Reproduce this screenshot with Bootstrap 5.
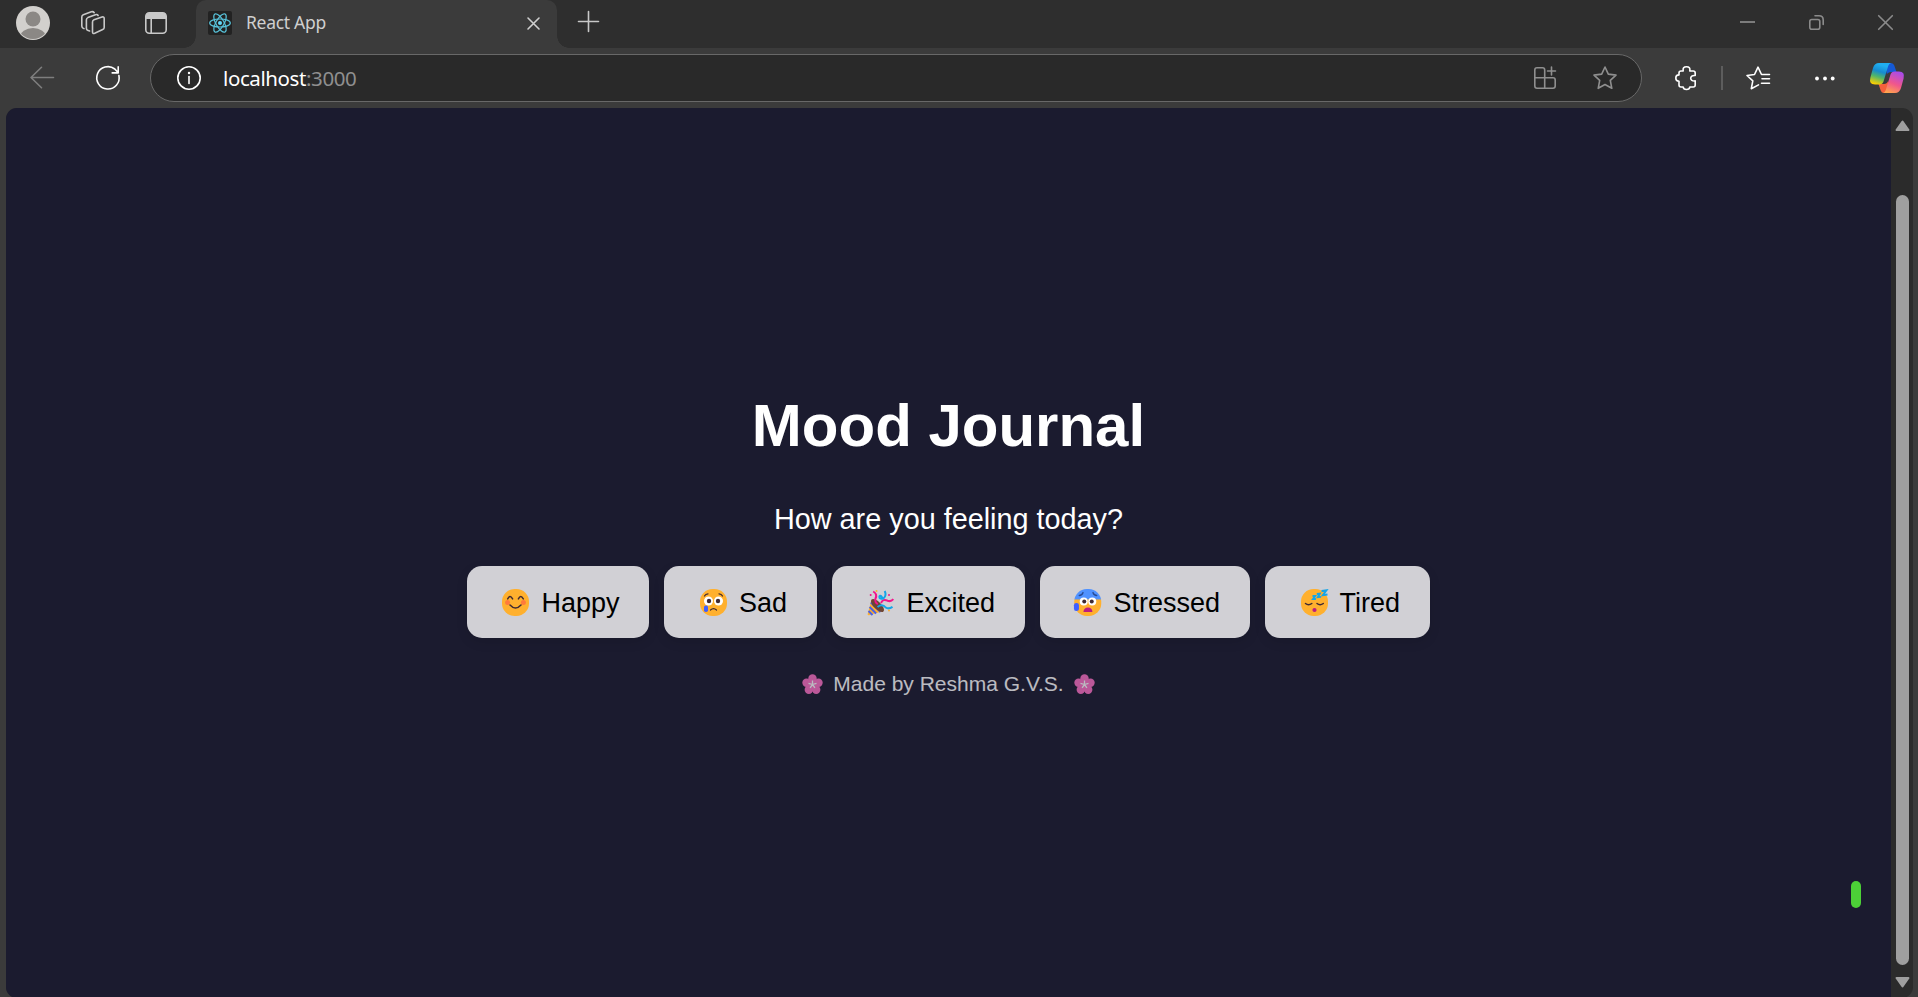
<!DOCTYPE html>
<html lang="en" data-bs-theme="dark">
<head>
<meta charset="utf-8">
<title>React App</title>
<link href="https://cdn.jsdelivr.net/npm/bootstrap@5.3.0/dist/css/bootstrap.min.css" rel="stylesheet">
<style>
html,body{height:100%}
body{background:#3b3b3b;overflow:hidden;font-family:"Noto Sans","Open Sans",sans-serif}
svg{display:block;flex:none;overflow:visible}
.ln{fill:none;stroke:currentColor;stroke-width:1.6;stroke-linecap:round;stroke-linejoin:round}
.strip{height:48px;background:#2e2e2e;color:#c8c8c8;padding-left:16px;padding-right:25px}
.strip-tools{gap:31px;width:180px;padding-bottom:2px}
.strip-tools svg:last-child{margin-left:9px}
.tab-shape{width:361px;height:48px;background:#3b3b3b;border-radius:10px 10px 0 0;padding:0 17px 2px 12px;color:#cfcfcf;font-size:17.5px}
.tab-shape::before,.tab-shape::after{content:"";position:absolute;bottom:0;width:12px;height:12px}
.tab-shape::before{left:-12px;background:radial-gradient(circle at 0 0,transparent 11.5px,#3b3b3b 12px)}
.tab-shape::after{right:-12px;background:radial-gradient(circle at 100% 0,transparent 11.5px,#3b3b3b 12px)}
.tab-title{margin-left:14px;letter-spacing:-.3px;padding-bottom:1px}
.new-tab{margin:0 0 5px 21px}
.win{gap:54px;color:#8b8b8b;padding-bottom:3px}
.tools{height:60px;padding:0 14px 0 30px;color:#fff}
.addr{width:1492px;height:48px;margin-left:30px;border:1.5px solid #686868;border-radius:24px;background:#292929;padding:0 24px 0 25.5px;font-size:20.5px}
.addr-text{margin-left:22.5px;letter-spacing:-.4px;line-height:1;padding-top:1px}
.dim{color:#8f8f8f}
.split{width:2px;height:24px;background:#5d5d5d;margin:0 23px 0 25px}
.frame{margin:0 5px 0 6px;height:890px;border-radius:11px;overflow:hidden;background:#2b2b2b}
.mood{background:#1b1b2f;font-family:"Liberation Sans",Arial,sans-serif;color:#fff;padding-top:283px}
.mood h1{font-size:60px;font-weight:700;line-height:70px;margin:0 0 41px}
.mood .ask{font-size:28.8px;line-height:34px;margin:0 0 30px}
.mood-row{gap:15px}
.mood-btn{--bs-btn-bg:#d1d0d5;--bs-btn-color:#000;--bs-btn-border-width:0;--bs-btn-border-radius:15px;--bs-btn-font-size:27px;--bs-btn-line-height:32px;--bs-btn-padding-x:0;height:72px;padding:2px 30px 0 35.5px;gap:12px;box-shadow:0 4px 12px rgba(0,0,0,.1)}
.mood-btn svg{margin-bottom:2px}
.mood-btn.wide{padding-left:34px}
.made{font-size:21px;line-height:24px;margin-top:34px;gap:10px;opacity:.7}
.spark{right:30px;top:773px;width:10px;height:27px;background:#4cd137}
.sbar{width:22px;padding:12px 0 9px}
.thumb{width:13px;height:770px;background:#9f9f9f;margin:64px 0 12px}
</style>
</head>
<body>
<div class="strip d-flex align-items-start">
  <div class="strip-tools d-flex align-items-center h-100">
    <svg width="34" height="34" viewBox="0 0 34 34"><defs><clipPath id="av"><circle cx="17" cy="17" r="16"/></clipPath></defs><circle cx="17" cy="17" r="17" fill="#d2d0cd"/><g clip-path="url(#av)" fill="#8b8885"><circle cx="17" cy="13" r="7.5"/><ellipse cx="17" cy="31" rx="13" ry="9"/></g></svg>
    <svg width="24" height="24" viewBox="0 0 24 24" class="ln"><path d="M11.500 11q0-1.600 1.500-2.200l8-2.800q2.200-.6 2.200 1.500v9q0 1.500-1.500 2.100l-8 3.600q-2.200.9-2.200-1.300z"/><path d="M8.600 20l-2-.7q-1.200-.5-1.200-2V8.800q0-1.500 1.500-2.200l7.500-2.900q2-.5 2.700.8"/><path d="M3 17.600l-1-.5q-1.200-.8-1.200-2.100V6q0-1.500 1.500-2.200l8-3q2-.5 2.900.9"/></svg>
    <svg width="22" height="22" viewBox="0 0 22 22"><rect x=".8" y=".8" width="20.400" height="20.400" rx="3.500" class="ln"/><path d="M1 7V4q0-3 3-3h14q3 0 3 3v3z" fill="#c8c8c8"/><path d="M6.200 7v14" class="ln"/></svg>
  </div>
  <div class="tab-shape position-relative d-flex align-items-center">
    <svg width="24" height="24" viewBox="0 0 24 24"><rect width="24" height="24" rx="2" fill="#222222"/><g fill="none" stroke="#58c4dc" stroke-width="1.200"><ellipse cx="12" cy="12" rx="10.300" ry="4"/><ellipse cx="12" cy="12" rx="10.300" ry="4" transform="rotate(60 12 12)"/><ellipse cx="12" cy="12" rx="10.300" ry="4" transform="rotate(120 12 12)"/></g><circle cx="12" cy="12" r="2" fill="#61dafb"/></svg>
    <span class="tab-title">React App</span>
    <svg class="ms-auto" width="13" height="13" viewBox="0 0 13 13"><path d="M1 1l11 11M12 1L1 12" class="ln"/></svg>
  </div>
  <div class="d-flex align-items-center flex-grow-1 h-100">
    <svg class="new-tab" width="21" height="21" viewBox="0 0 21 21"><path d="M10.500 .5v20M.5 10.500h20" class="ln"/></svg>
    <div class="win d-flex align-items-center ms-auto">
      <svg width="15" height="15" viewBox="0 0 15 15"><path d="M0 7h15" stroke="currentColor" stroke-width="1.700"/></svg>
      <svg width="15" height="15" viewBox="0 0 15 15" class="ln"><rect x=".8" y="4.500" width="10" height="9.700" rx="2"/><path d="M6 .8h4q4.200 0 4.200 4.200v4.500"/></svg>
      <svg width="15" height="15" viewBox="0 0 15 15"><path d="M.7.7l13.600 13.600M14.300.7L.7 14.300" class="ln"/></svg>
    </div>
  </div>
</div>
<div class="tools d-flex align-items-center">
  <svg width="24" height="22" viewBox="0 0 24 22" style="color:#7e7e7e"><path d="M23.500 10.500H1M11.500.3L1 10.500l10.500 10.200" class="ln"/></svg>
  <svg style="margin-left:42px" width="24" height="24" viewBox="0 0 24 24"><path d="M22.900 9.500A11.200 11.200 0 1 1 18.800 3L22 6.500M22.200.9v6h-6" class="ln"/></svg>
  <div class="addr d-flex align-items-center">
    <svg width="24" height="24" viewBox="0 0 24 24"><circle cx="12" cy="12" r="11.200" class="ln"/><path d="M12 10.500v7" class="ln"/><circle cx="12" cy="7" r="1.200" fill="#fff"/></svg>
    <span class="addr-text">localhost<span class="dim">:3000</span></span>
    <svg class="ln dim ms-auto" width="22" height="22" viewBox="0 0 22 22"><path d="M10.700 11V3q0-2.200-2.200-2.200H3Q.8.800.8 3v16q0 2.200 2.200 2.200h16q2.200 0 2.200-2.200v-6q0-2.200-2.200-2.200H.8M10.700 11v10M17.500 0v8M13.500 4h8"/></svg>
    <svg class="ln dim" style="margin-left:37px" width="24" height="24" viewBox="0 0 24 24"><path d="M12 1l3.300 7.100 7.700 1-5.700 5.300 1.500 7.900L12 18.500l-6.800 3.800 1.500-7.900L1 9.100l7.700-1z"/></svg>
  </div>
  <svg class="ln" style="margin-left:32.500px" width="21" height="24" viewBox="0 0 21 24"><path d="M6 5h2.200q-.8-4.200 3.300-4.200T14.800 5h3.400q2 0 2 2v2.500c-6-.8-6 6.200 0 5.400V19q0 2-2 2h-3.400q-.2 2.500-3.300 2.500T8.200 21H6q-2 0-2-2v-3.700Q.8 15 .8 12T4 8.900V7q0-2 2-2z"/></svg>
  <div class="split"></div>
  <svg class="ln" width="24" height="24" viewBox="0 0 24 24"><path d="M12.500 18.900L5.300 22.700l1.500-7.900L1 9.500l7.500-1L12 1.200l3.500 7.300h1M16.500 8.500h7M16 12.800h7.500M15.500 17.200h8"/></svg>
  <svg style="margin-left:45px" width="20" height="4" viewBox="0 0 20 4" fill="#fff"><circle cx="2" cy="2.500" r="1.900"/><circle cx="10" cy="2.500" r="1.900"/><circle cx="17.700" cy="2.500" r="1.900"/></svg>
  <svg class="ms-auto" width="34" height="30" viewBox="0 0 34 30"><defs>
    <linearGradient id="c1" x1=".6" y1="0" x2=".3" y2="1"><stop offset=".1" stop-color="#20aef0"/><stop offset=".4" stop-color="#168bd0"/><stop offset=".65" stop-color="#50b66a"/><stop offset="1" stop-color="#ffd000"/></linearGradient>
    <linearGradient id="c2" x1=".7" y1="0" x2=".3" y2="1"><stop stop-color="#a84bea"/><stop offset=".55" stop-color="#f0568c"/><stop offset="1" stop-color="#ffa34e"/></linearGradient></defs>
    <path d="M15 0h6q2.500 0 3.300 2.500L26.500 9H21q-3 0-4 3z" fill="#1559d5"/>
    <path d="M19 30h-5q-2.500 0-3.300-2.500L8.500 21H14q3 0 4-3z" fill="#f5603c"/>
    <path d="M9 0h12q-2 .3-2.800 3l-4.700 15.500Q12.500 21.500 9.500 21.500H5Q-1.300 21.500.4 14.500L3 5Q4.500 0 9 0z" fill="url(#c1)"/>
    <path d="M25 30H13q2-.3 2.800-3l4.700-15.500Q21.500 8.500 24.500 8.500H29q6.300 0 4.600 7L31 25q-1.500 5-6 5z" fill="url(#c2)"/>
    <path d="M17.300 10.500h2.800L17 19.500h-2.600z" fill="#3b3b3b"/></svg>
</div>
<div class="frame d-flex">
  <main class="mood position-relative flex-grow-1 d-flex flex-column align-items-center">
    <h1>Mood Journal</h1>
    <p class="ask">How are you feeling today?</p>
    <div class="mood-row d-flex">
      <button class="btn mood-btn d-flex align-items-center"><svg width="27" height="27" viewBox="0 0 27 27"><rect width="27" height="27" rx="12.500" fill="#ffb02e"/><circle cx="5.600" cy="13.500" r="2.500" fill="#ff7a3c"/><circle cx="21.400" cy="13.500" r="2.500" fill="#ff7a3c"/><path d="M5.700 9.900q2.300-4.600 4.900 0M16.400 9.900q2.300-4.600 4.900 0M8 16q5.500 6 11 0" fill="none" stroke="#402a32" stroke-width="1.500" stroke-linecap="round"/></svg>Happy</button>
      <button class="btn mood-btn d-flex align-items-center"><svg width="27" height="27" viewBox="0 0 27 27"><rect width="27" height="27" rx="12.500" fill="#ffb02e"/><circle cx="8.500" cy="12" r="4.500" fill="#fff"/><circle cx="18.500" cy="12" r="4.500" fill="#fff"/><circle cx="9" cy="12" r="2.200" fill="#402a32"/><circle cx="18" cy="12" r="2.200" fill="#402a32"/><path d="M4.500 7q1-2 3.500-2.200M22.500 7q-1-2-3.500-2.200M10.500 21q3-2.700 6 0" fill="none" stroke="#402a32" stroke-width="1.200" stroke-linecap="round"/><rect x="4" y="16.500" width="4" height="6.500" rx="1.800" fill="#3f5fff"/></svg>Sad</button>
      <button class="btn mood-btn d-flex align-items-center"><svg width="27" height="27" viewBox="0 0 27 27"><path d="M4.500 10.500L.7 25q-.2 1.500 1.300 1.300L16.500 22z" fill="#ffb02e"/><path d="M3.800 13.500L13.500 23M2.600 18l6.500 6.500M1.500 22l4 4" stroke="#4a62e8" stroke-width="2"/><ellipse cx="10.500" cy="16.500" rx="3.700" ry="8.400" transform="rotate(-45 10.500 16.500)" fill="#6d4534"/><path d="M6.200 2.500q4.500 2.500 2.300 7-1 4 2.300 5.500M14 14q2-4.500 6.500-2.300 3.300 1.300 5.800-1.500" fill="none" stroke="#f3148b" stroke-width="2"/><path d="M10.500 18q5-3.700 8.200.5 3 2 6.800-.6M17.700 2q2.200 4.500-1.300 7.500-4.500 1-4-2.200 1.200-2 3.200 2.200" fill="none" stroke="#15a5e8" stroke-width="2"/><circle cx="9.500" cy="2" r="1" fill="#ffb02e"/><circle cx="3.700" cy="6" r="1" fill="#f3148b"/><circle cx="22" cy="6" r="1" fill="#f3148b"/><circle cx="22" cy="21.500" r="1" fill="#ffb02e"/></svg>Excited</button>
      <button class="btn mood-btn wide d-flex align-items-center"><svg width="27.500" height="27" viewBox="0 0 27 27"><defs><linearGradient id="st" x2="0" y2="1"><stop offset=".35" stop-color="#5092ff"/><stop offset=".42" stop-color="#ffb02e"/></linearGradient></defs><rect width="27" height="27" rx="12.500" fill="url(#st)"/><circle cx="9.500" cy="12.500" r="4" fill="#fff"/><circle cx="18" cy="12.500" r="4" fill="#fff"/><circle cx="10" cy="12.500" r="2" fill="#402a32"/><circle cx="17.500" cy="12.500" r="2" fill="#402a32"/><path d="M5 6.500q3-.2 3.800-3M22.500 6.500q-3-.2-3.800-3" fill="none" stroke="#294b94" stroke-width="1.300" stroke-linecap="round"/><path d="M9.200 23q.3-4.500 4.500-4.500t4.500 4.500z" fill="#bb1d80"/><rect x="-.3" y="14" width="5" height="8" rx="2.300" fill="#3f5fff"/></svg>Stressed</button>
      <button class="btn mood-btn d-flex align-items-center"><svg width="27" height="27" viewBox="0 0 27 27"><rect width="27" height="27" rx="12.500" fill="#ffb02e"/><path d="M4.500 14.500q3 2.500 6.300 0M16 14.500q3 2.500 6.300 0" fill="none" stroke="#402a32" stroke-width="1.500" stroke-linecap="round"/><circle cx="13.500" cy="21" r="2.100" fill="#bb1d80"/><path d="M11.500 7h2.700l-2.200 3h2.900M15.800 5l3-.3-2 3.500 3.200-.3M20.500 2l5-.8-3.700 5 4.700-.7" fill="none" stroke="#15a5e8" stroke-width="1.900"/></svg>Tired</button>
    </div>
    <div class="made d-flex align-items-center">
      <svg width="21" height="21" viewBox="0 0 21 21"><g id="fl"><g fill="#ff72c6"><circle cx="10.500" cy="4.500" r="4.200"/><circle cx="16.500" cy="8.800" r="4.200"/><circle cx="14.200" cy="15.800" r="4.200"/><circle cx="6.800" cy="15.800" r="4.200"/><circle cx="4.500" cy="8.800" r="4.200"/><circle cx="10.500" cy="10.800" r="6.500"/></g><path d="M10.500 10.500V6.500M10.500 10.500l4-1.200M10.500 10.500l2.400 3.300M10.500 10.500l-2.400 3.300M10.500 10.500l-4-1.200" stroke="#fff" stroke-width="1.300"/></g></svg>
      <span>Made by Reshma G.V.S.</span>
      <svg width="21" height="21" viewBox="0 0 21 21"><use href="#fl"/></svg>
    </div>
    <div class="spark position-absolute rounded-pill"></div>
  </main>
  <div class="sbar d-flex flex-column align-items-center">
    <svg width="15" height="11" viewBox="0 0 15 11"><path d="M7.500 1.500L13.500 10H1.500z" fill="#9f9f9f" stroke="#9f9f9f" stroke-width="2" stroke-linejoin="round"/></svg>
    <div class="thumb rounded-pill"></div>
    <svg width="15" height="11" viewBox="0 0 15 11"><path d="M7.500 9.500L13.500 1H1.500z" fill="#9f9f9f" stroke="#9f9f9f" stroke-width="2" stroke-linejoin="round"/></svg>
  </div>
</div>
<script src="https://cdn.jsdelivr.net/npm/bootstrap@5.3.0/dist/js/bootstrap.bundle.min.js"></script>
</body>
</html>
